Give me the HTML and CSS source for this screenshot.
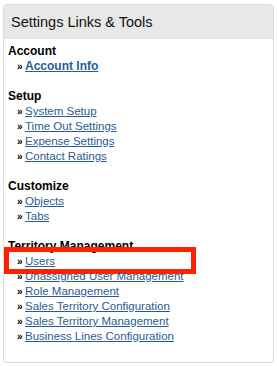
FILE: index.html
```html
<!DOCTYPE html>
<html>
<head>
<meta charset="utf-8">
<link rel="stylesheet" href="styles.css">
</head>
<body>
<div class="card">
  <div class="card-header">Settings Links &amp; Tools</div>
  <div class="card-body">
    <div class="section">
      <div class="section-title">Account</div>
      <ul class="links">
        <li><a class="strong" href="#">Account Info</a></li>
      </ul>
    </div>
    <div class="section">
      <div class="section-title">Setup</div>
      <ul class="links">
        <li><a href="#">System Setup</a></li>
        <li><a href="#">Time Out Settings</a></li>
        <li><a href="#">Expense Settings</a></li>
        <li><a href="#">Contact Ratings</a></li>
      </ul>
    </div>
    <div class="section">
      <div class="section-title">Customize</div>
      <ul class="links">
        <li><a href="#">Objects</a></li>
        <li><a href="#">Tabs</a></li>
      </ul>
    </div>
    <div class="section">
      <div class="section-title">Territory Management</div>
      <ul class="links">
        <li class="highlight"><a href="#">Users</a></li>
        <li><a href="#">Unassigned User Management</a></li>
        <li><a href="#">Role Management</a></li>
        <li><a href="#">Sales Territory Configuration</a></li>
        <li><a href="#">Sales Territory Management</a></li>
        <li><a href="#">Business Lines Configuration</a></li>
      </ul>
    </div>
  </div>
</div>
</body>
</html>
```
FILE: styles.css
```css
*, *::before, *::after { box-sizing: border-box; }
html, body { margin: 0; padding: 0; background: #fff; }
body {
  padding: 4px 3px 0 3px;
  font-family: "Liberation Sans", Arial, Helvetica, sans-serif;
}
.card {
  width: 271px;
  border: 1px solid #dcdcdc;
  border-radius: 4px;
  position: relative;
}
.card-header {
  background: #e8e8e8;
  height: 34px;
  padding: 0 0 0 7px;
  font-size: 14.5px;
  line-height: 34px;
  color: #111;
  border-radius: 3px 3px 0 0;
}
.card-body {
  padding: 5px 0 18px 4px;
}
.section { margin-bottom: 15px; }
.section:last-child { margin-bottom: 0; }
.section-title {
  font-size: 12px;
  font-weight: bold;
  line-height: 15px;
  color: #000;
}
.links {
  list-style: none;
  margin: 0;
  padding: 0 0 0 9px;
}
.links li {
  font-size: 11.5px;
  line-height: 15px;
  position: relative;
}
.links li::before {
  content: "\00BB";
  font-size: 10px;
  font-weight: bold;
  color: #000;
  display: inline-block;
  width: 8px;
}
.links a {
  color: #2a5c94;
  text-decoration: underline;
}
.links a.strong { font-weight: bold; font-size: 12px; }
.highlight::after {
  content: "";
  position: absolute;
  left: -13px;
  top: -7px;
  width: 192px;
  height: 27px;
  border: 5px solid #ff2200;
}
```
